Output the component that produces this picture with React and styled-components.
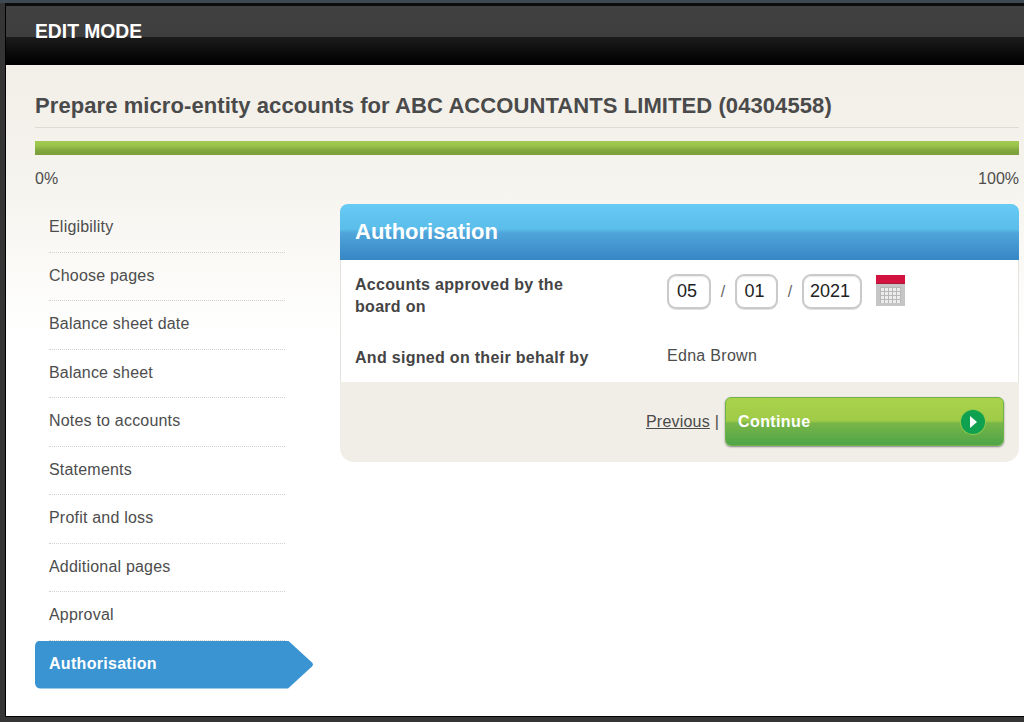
import React from 'react';
import styled, { createGlobalStyle } from 'styled-components';

const GlobalStyle = createGlobalStyle`
    html, body {
        margin: 0;
        padding: 0;
        background: #3a3a3a;
    }
    * {
        box-sizing: border-box;
    }
`;

const steps = [
    'Eligibility',
    'Choose pages',
    'Balance sheet date',
    'Balance sheet',
    'Notes to accounts',
    'Statements',
    'Profit and loss',
    'Additional pages',
    'Approval',
];

const CalendarIcon = () => (
    <svg width="29" height="31" viewBox="0 0 29 31">
        <rect x="0" y="0" width="29" height="31" fill="#c6c6c6" />
        <rect x="0" y="0" width="29" height="8" fill="#d3123f" />
        <rect x="0" y="8" width="29" height="1" fill="#a81a3c" />
        <rect x="4" y="12" width="21" height="16" fill="#ececec" />
        <path
            d="M4 12.5h21M4 16.5h21M4 20.5h21M4 24.5h21M4.5 12v16M8.5 12v16M12.5 12v16M16.5 12v16M20.5 12v16M24.5 12v16"
            stroke="#b8b8b8"
            strokeWidth="1"
            fill="none"
        />
    </svg>
);

const PlayIcon = () => (
    <svg width="26" height="26" viewBox="0 0 26 26">
        <circle cx="13" cy="13" r="13" fill="#8cc84a" />
        <circle cx="13" cy="13" r="12" fill="#0fa14f" />
        <path d="M10 7 L17 13 L10 19 Z" fill="#ffffff" />
    </svg>
);

const App = () => {
    return (
        <>
            <GlobalStyle />
            <Frame>
                <TopBar>EDIT MODE</TopBar>
                <Page>
                    <Title>Prepare micro-entity accounts for ABC ACCOUNTANTS LIMITED (04304558)</Title>
                    <ProgressBar />
                    <ProgressLabels>
                        <span>0%</span>
                        <span>100%</span>
                    </ProgressLabels>
                    <Columns>
                        <Sidebar>
                            {steps.map((step) => (
                                <Step key={step}>{step}</Step>
                            ))}
                            <ActiveStep>Authorisation</ActiveStep>
                        </Sidebar>
                        <Panel>
                            <PanelHeader>Authorisation</PanelHeader>
                            <PanelBody>
                                <FormRow>
                                    <FormLabel>Accounts approved by the board on</FormLabel>
                                    <DateFields>
                                        <DateBox $width={44} value="05" readOnly />
                                        <Slash>/</Slash>
                                        <DateBox $width={43} value="01" readOnly />
                                        <Slash>/</Slash>
                                        <DateBox $width={60} value="2021" readOnly />
                                        <CalendarButton>
                                            <CalendarIcon />
                                        </CalendarButton>
                                    </DateFields>
                                </FormRow>
                                <SignedRow>
                                    <FormLabel>And signed on their behalf by</FormLabel>
                                    <SignedName>Edna Brown</SignedName>
                                </SignedRow>
                            </PanelBody>
                            <PanelFooter>
                                <PreviousLink href="#">Previous</PreviousLink>
                                <Divider>|</Divider>
                                <ContinueButton>
                                    Continue
                                    <PlayIcon />
                                </ContinueButton>
                            </PanelFooter>
                        </Panel>
                    </Columns>
                </Page>
            </Frame>
        </>
    );
};

const Frame = styled.div`
    width: 1024px;
    height: 722px;
    overflow: hidden;
    display: flex;
    flex-direction: column;
    padding: 0 0 5px 5px;
    border-top: 3px solid #3d4a52;
    background: #353535;
    font-family: "Liberation Sans", Arial, sans-serif;
`;

const TopBar = styled.div`
    height: 62px;
    padding: 14px 0 0 29px;
    flex-shrink: 0;
    border-top: 3px solid #0c0c0c;
    border-left: 1px solid #000000;
    background: linear-gradient(to bottom, #414141 0, #3e3e3e 31px, #1c1c1c 31px, #000000 57px);
    color: #ffffff;
    font-size: 19.3px;
    line-height: 24px;
    font-weight: bold;
`;

const Page = styled.div`
    flex: 1;
    min-height: 0;
    padding: 0 5px 0 29px;
    border-left: 1px solid #000000;
    border-bottom: 1px solid #000000;
    background: linear-gradient(to bottom, #f2efe8 0, #f5f3ed 110px, #ffffff 270px);
`;

const Title = styled.h1`
    margin: 0;
    height: 63px;
    padding-top: 28px;
    border-bottom: 1px solid #dedbd3;
    color: #4a4a4a;
    font-size: 22px;
    line-height: 26px;
    font-weight: bold;
    letter-spacing: 0.08px;
`;

const ProgressBar = styled.div`
    height: 14px;
    margin-top: 13px;
    background: linear-gradient(to bottom, #a3cc50 0, #9ac24b 35%, #82a73e 65%, #7a9f3a 100%);
`;

const ProgressLabels = styled.div`
    display: flex;
    justify-content: space-between;
    margin-top: 15px;
    color: #4d4d4d;
    font-size: 16px;
    line-height: 18px;
`;

const Columns = styled.div`
    display: flex;
    align-items: flex-start;
    margin-top: 16px;
`;

const Sidebar = styled.ul`
    list-style: none;
    width: 250px;
    margin: 0 55px 0 0;
    padding: 0;
    flex-shrink: 0;
`;

const Step = styled.li`
    height: 48.5px;
    margin-left: 14px;
    padding-top: 4px;
    border-bottom: 1px dotted #d2d2cb;
    color: #4d4d4d;
    font-size: 16px;
    line-height: 38px;
    letter-spacing: 0.2px;
`;

const ActiveStep = styled.li`
    width: 279px;
    height: 48px;
    padding-left: 14px;
    background: #3a94d2;
    clip-path: path('M6 0H253L277 22Q278.8 24 277 26L253 48H6Q0 48 0 42V6Q0 0 6 0Z');
    color: #ffffff;
    font-size: 16px;
    line-height: 46px;
    font-weight: bold;
    letter-spacing: 0.3px;
`;

const Panel = styled.section`
    flex: 1;
`;

const PanelHeader = styled.h2`
    margin: 0;
    height: 56px;
    padding-left: 15px;
    border-radius: 8px 8px 0 0;
    background: linear-gradient(to bottom, #67cbf5 0, #5bbdea 25px, #4fa5da 29px, #3686c4 100%);
    color: #ffffff;
    font-size: 22px;
    line-height: 55px;
    font-weight: bold;
`;

const PanelBody = styled.div`
    height: 122px;
    background: #ffffff;
    border-left: 1px solid #e4e2dc;
    border-right: 1px solid #e4e2dc;
`;

const FormRow = styled.div`
    display: flex;
    height: 72px;
    padding: 14px 0 0 14px;
`;

const SignedRow = styled(FormRow)`
    height: 50px;
    padding-top: 15px;
`;

const FormLabel = styled.div`
    width: 312px;
    padding: 0 70px 0 0;
    color: #444444;
    font-size: 16px;
    line-height: 22px;
    font-weight: bold;
    letter-spacing: 0.3px;
`;

const DateFields = styled.div`
    display: flex;
    align-items: flex-start;
`;

const DateBox = styled.input`
    width: ${(props) => props.$width}px;
    height: 35px;
    padding: 0 4px 0 0;
    border: 2px solid #cacaca;
    border-radius: 9px;
    background: #ffffff;
    box-shadow: inset 0 1px 1px rgba(0, 0, 0, 0.08), 0 1px 0 rgba(0, 0, 0, 0.12);
    color: #222222;
    font-family: "Liberation Sans", Arial, sans-serif;
    font-size: 18px;
    text-align: center;
    outline: none;
`;

const Slash = styled.span`
    width: 24px;
    text-align: center;
    color: #666666;
    font-size: 16px;
    line-height: 35px;
`;

const CalendarButton = styled.span`
    display: block;
    margin: 1px 0 0 14px;
`;

const SignedName = styled.div`
    margin-top: -1px;
    color: #4d4d4d;
    font-size: 16px;
    line-height: 19px;
    letter-spacing: 0.3px;
`;

const PanelFooter = styled.div`
    display: flex;
    align-items: flex-start;
    height: 80px;
    padding: 15px 15px 0 0;
    justify-content: flex-end;
    border-radius: 0 0 14px 14px;
    background: #f1eee7;
`;

const PreviousLink = styled.a`
    margin-top: 16px;
    color: #4a4a4a;
    font-size: 16px;
    letter-spacing: 0.2px;
`;

const Divider = styled.span`
    margin: 16px 6px 0 5px;
    color: #4a4a4a;
    font-size: 16px;
`;

const ContinueButton = styled.button`
    display: flex;
    align-items: center;
    justify-content: space-between;
    width: 279px;
    height: 49px;
    padding: 0 17px 0 12px;
    border: 1px solid #6fb24a;
    border-radius: 6px;
    background: linear-gradient(to bottom, #a9d34a 0, #a0cb48 48%, #78b548 54%, #4fa548 100%);
    box-shadow: 0 1px 2px rgba(0, 0, 0, 0.45);
    color: #ffffff;
    font-family: "Liberation Sans", Arial, sans-serif;
    font-size: 16px;
    font-weight: bold;
    letter-spacing: 0.4px;
`;

export default App;
